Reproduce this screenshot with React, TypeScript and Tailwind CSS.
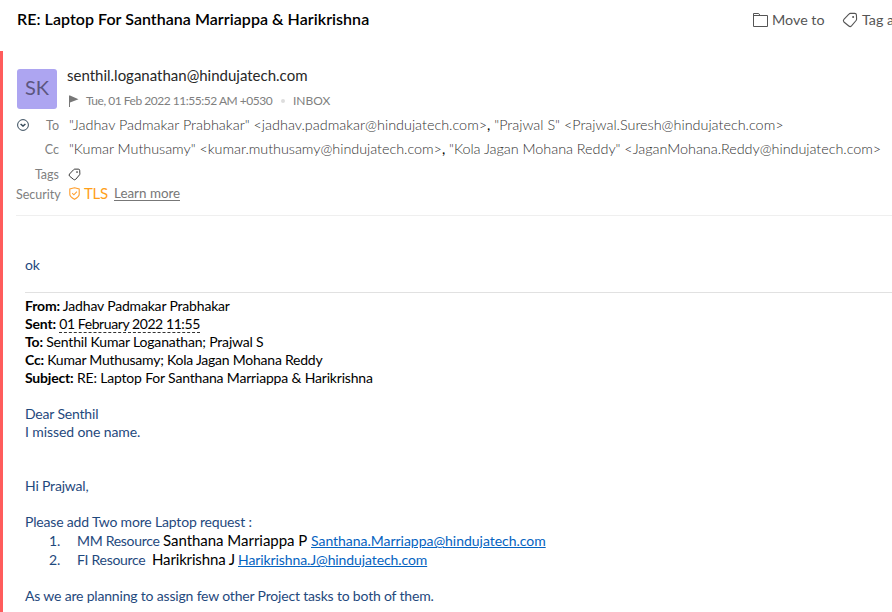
import type { ReactNode } from "react";

function FolderIcon() {
  return (
    <svg className="mr-1 h-4 w-[15px] shrink-0" viewBox="0 0 15 16" fill="none" stroke="#555" strokeWidth="1">
      <path d="M.5 14.5v-13h5.2l1.4 2h7.4v11H.5M.5 3.5h6.6" />
    </svg>
  );
}

function TagIcon({ className }: { className: string }) {
  return (
    <svg className={className} viewBox="0 0 16 16" fill="none" stroke="currentColor" strokeWidth="1.1">
      <path d="M8.4 1.4h4.3q1.6 0 1.7 1.5l.2 4.2q0 .8-.5 1.4l-4.6 5.4q-1.3 1.3-2.7.1L1.9 10q-1.1-1.3 0-2.6l5-5.3q.6-.7 1.5-.7Z" />
      <circle cx="11.1" cy="5" r="1" fill="currentColor" stroke="none" />
    </svg>
  );
}

function Line({ children, className = "" }: { children?: ReactNode; className?: string }) {
  return <div className={`h-[18px] leading-[18px] ${className}`}>{children}</div>;
}

function Label({ children }: { children: ReactNode }) {
  return <span className="w-[43px] shrink-0 pt-0.5 text-right text-[12.5px] leading-[18px] text-[#808080]">{children}</span>;
}

export default function App() {
  return (
    <div className="flex h-[612px] w-[892px] flex-col overflow-hidden whitespace-pre bg-white font-['Lato',sans-serif]">
      <header className="flex h-[51px] shrink-0 items-start pl-[17px] pt-[9px]">
        <h1 className="w-[736px] shrink-0 text-[16px] font-semibold leading-5 tracking-[0.04px] text-black">
          RE: Laptop For Santhana Marriappa &amp; Harikrishna
        </h1>
        <div className="flex h-[22px] shrink-0 items-center text-[14.3px] text-[#555]">
          <FolderIcon />
          <span className="w-[70px]">Move to</span>
          <TagIcon className="mr-1 h-4 w-4 shrink-0" />
          <span>Tag a</span>
        </div>
      </header>
      <main className="flex-1 border-l-[3px] border-[#ff5c5c]">
        <section className="ml-[13px] h-[165px] border-b border-[#efefef]">
          <div className="flex pl-px pt-[14px]">
            <div className="mt-1 flex h-10 w-10 shrink-0 items-center justify-center rounded-[3px] bg-[#ada5f1] pb-[4px] text-[20px] text-[#5c5680]">
              SK
            </div>
            <div className="pl-[10px]">
              <div className="h-[25px] text-[15px] leading-[21px] text-[#282828]">senthil.loganathan@hindujatech.com</div>
              <div className="flex h-[22px] items-center text-[12px] text-[#808080]">
                <svg className="ml-[2px] mr-[7px] h-3 w-[10px]" viewBox="0 0 10 12" fill="#777">
                  <path d="M0 .5h1V12H0zM1 .5 9.5 4.3 1 7.5z" />
                </svg>
                <span className="w-[186px] tracking-[-0.48px]">Tue, 01 Feb 2022 11:55:52 AM +0530</span>
                <span className="ml-[9px] mr-[8px] h-1 w-1 rounded-full bg-[#ddd]" />
                <span>INBOX</span>
              </div>
            </div>
          </div>
          <div className="flex h-6 items-center pt-[2px]">
            <svg className="ml-px h-3 w-3" viewBox="0 0 12 12" fill="none" stroke="#34495a">
              <circle cx="6" cy="6" r="5.4" strokeWidth="1" />
              <path d="m3.6 5 2.4 2.1L8.4 5" strokeWidth="1.5" />
            </svg>
            <span className="w-[30px] pt-0.5 text-right text-[12.5px] leading-[18px] text-[#808080]">To</span>
            <span className="pl-[10px] text-[14.4px] font-light text-[#333]">
              "Jadhav Padmakar Prabhakar" &lt;jadhav.padmakar@hindujatech.com&gt;<b className="font-normal text-black">,</b> "Prajwal S" &lt;Prajwal.Suresh@hindujatech.com&gt;
            </span>
          </div>
          <div className="flex h-6 items-center pt-[2px]">
            <Label>Cc</Label>
            <span className="pl-[10px] text-[14.4px] font-light tracking-[-0.03px] text-[#333]">
              "Kumar Muthusamy" &lt;kumar.muthusamy@hindujatech.com&gt;<b className="font-normal text-black">,</b> "Kola Jagan Mohana Reddy" &lt;JaganMohana.Reddy@hindujatech.com&gt;
            </span>
          </div>
          <div className="flex h-6 items-center pt-[3px]">
            <Label>Tags</Label>
            <TagIcon className="ml-[9px] mt-[2px] h-[13px] w-[13px] text-[#222]" />
          </div>
          <div className="flex h-[18px] items-center pt-px">
            <Label>Security</Label>
            <svg className="ml-[10px] mr-[4px] h-[13px] w-[11px]" viewBox="0 0 11 13" fill="none" stroke="#ff9f2e" strokeWidth="1.1">
              <path d="M5.5.7 10.2 2v5.3q0 2.5-4.7 5Q.8 9.8.8 7.3V2z" />
              <path d="m3.2 6.2 1.7 1.6 3-3.1" />
            </svg>
            <span className="w-[30px] text-[15px] tracking-[-0.3px] text-[#ff9f1a]">TLS</span>
            <span className="border-b border-[#777] text-[13.4px] leading-[14px] text-[#777]">Learn more</span>
          </div>
        </section>
        <section className="pl-[22px] text-[14px] tracking-[-0.18px] text-[#1f497d]">
          <Line className="mt-[40px]">ok</Line>
          <div className="mt-[18px] h-[5px] border-t border-[#e1e1e1]" />
          <div className="text-black">
            <Line><b>From:</b> Jadhav Padmakar Prabhakar</Line>
            <Line><b>Sent:</b> <span className="inline-block h-[18px] border-b border-dashed border-[#333] tracking-[-0.42px]">01 February 2022 11:55</span></Line>
            <Line><b>To:</b> Senthil Kumar Loganathan; Prajwal S</Line>
            <Line className="tracking-[-0.23px]"><b>Cc:</b> Kumar Muthusamy; Kola Jagan Mohana Reddy</Line>
            <Line><b>Subject:</b> RE: Laptop For Santhana Marriappa &amp; Harikrishna</Line>
          </div>
          <Line className="mt-[18px]">Dear Senthil</Line>
          <Line className="tracking-[-0.1px]">I missed one name.</Line>
          <Line className="mt-9">Hi Prajwal,</Line>
          <Line className="mt-[18px]">Please add Two more Laptop request :</Line>
          <div className="flex h-[19px] items-center pl-6">
            <span className="w-7">1.</span>
            <span className="w-[86px] tracking-[-0.3px]">MM Resource</span>
            <span className="w-[148px] text-[15px] tracking-[-0.03px] text-black">Santhana Marriappa P</span>
            <span className="tracking-[-0.03px] text-[#0563c1] underline">Santhana.Marriappa@hindujatech.com</span>
          </div>
          <div className="flex h-[19px] items-center pl-6">
            <span className="w-7">2.</span>
            <span className="w-[75px] tracking-[-0.3px]">FI Resource</span>
            <span className="w-[86px] text-[15px] tracking-[-0.15px] text-black">Harikrishna J</span>
            <span className="tracking-[-0.1px] text-[#0563c1] underline">Harikrishna.J@hindujatech.com</span>
          </div>
          <Line className="mt-[18px]">As we are planning to assign few other Project tasks to both of them.</Line>
        </section>
      </main>
    </div>
  );
}
